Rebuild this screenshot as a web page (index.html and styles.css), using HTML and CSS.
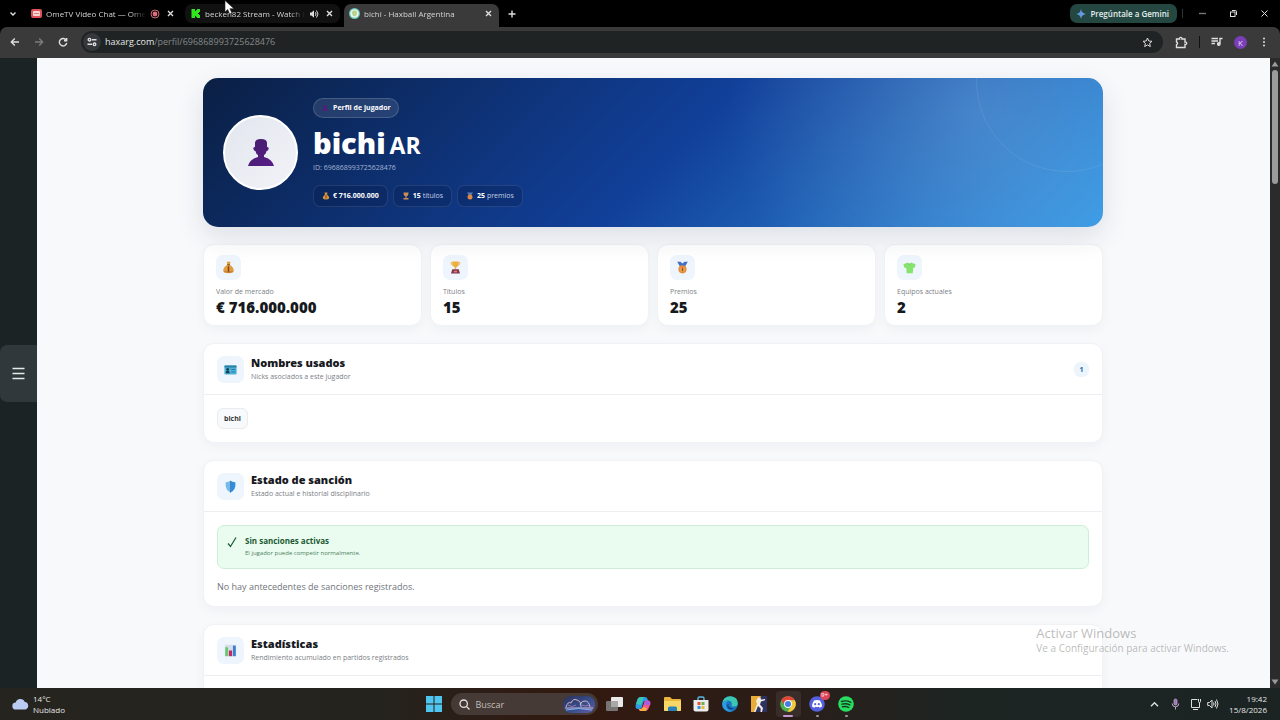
FILE: index.html
```html
<!DOCTYPE html>
<html lang="es">
<head>
    <meta charset="UTF-8">
    <meta name="viewport" content="width=device-width, initial-scale=1.0">
    <title>bichi - Haxball Argentina</title>
    <link rel="stylesheet" href="styles.css">
</head>
<body>
    <div class="tab-strip">
        <button class="icon-button tab-search" aria-label="Buscar pestañas">
            <svg class="stroke" width="10" height="10" viewBox="0 0 10 10"><path d="M2.5 3.5 5 6l2.500-2.500"/></svg>
        </button>
        <div class="tab">
            <svg width="11" height="11" viewBox="0 0 11 11"><rect y="1" width="11" height="9" rx="2" fill="#e0525a"/><rect x="2" y="3" width="7" height="5" rx="1" fill="#f6d6d2"/><path d="M3 5.500h5" stroke="#d98484"/></svg>
            <a class="tab-title" href="#">OmeTV Video Chat — Ome</a>
            <svg width="10" height="10" viewBox="0 0 10 10"><circle cx="5" cy="5" r="4" fill="none" stroke="#cf6a78"/><circle cx="5" cy="5" r="2.400" fill="#e06c7c"/></svg>
            <button class="icon-button tab-close" aria-label="Cerrar"><svg class="stroke" width="7" height="7" viewBox="0 0 7 7"><path d="m1 1 5 5M6 1 1 6"/></svg></button>
        </div>
        <div class="tab tab-dark">
            <svg width="11" height="11" viewBox="0 0 11 11"><path d="M1.500 1H5v2h1V2h1V1h3v3H9v1H8v1h1v1h1v3H7V9H6V8H5v2H1.500z" fill="#2fe61c"/></svg>
            <a class="tab-title" href="#">becken82 Stream - Watch L</a>
            <svg width="10" height="10" viewBox="0 0 10 10"><path d="M1 3.500h1.500L5 1.300v7.400L2.500 6.500H1z" fill="#ddd"/><path d="M6.300 3.200q1.500 1.800 0 3.600M7.500 1.500q3 3.500 0 7" fill="none" stroke="#ddd"/></svg>
            <button class="icon-button tab-close" aria-label="Cerrar"><svg class="stroke" width="7" height="7" viewBox="0 0 7 7"><path d="m1 1 5 5M6 1 1 6"/></svg></button>
        </div>
        <div class="tab tab-active">
            <svg width="11" height="11" viewBox="0 0 11 11"><circle cx="5.500" cy="5.500" r="5.500" fill="#63c4b8"/><circle cx="5.500" cy="5.500" r="4.300" fill="#e9f5e6"/><path d="M5.500 2.300 7.800 3.500v2.200q-.5 2-2.300 2.800-1.800-.8-2.300-2.800V3.500z" fill="#a8cf8e"/><path d="M5.500 3.500v3.600" stroke="#e6d46a"/></svg>
            <a class="tab-title" href="#">bichi - Haxball Argentina</a>
            <button class="icon-button tab-close" aria-label="Cerrar"><svg class="stroke" width="7" height="7" viewBox="0 0 7 7"><path d="m1 1 5 5M6 1 1 6"/></svg></button>
        </div>
        <button class="icon-button new-tab" aria-label="Nueva pestaña"><svg class="stroke" width="8" height="8" viewBox="0 0 8 8"><path d="M4 .5v7M.5 4h7"/></svg></button>
        <button class="gemini">
            <svg width="10" height="10" viewBox="0 0 10 10">
                <defs><linearGradient id="spark" x1="0" y1="0" x2="1" y2="0"><stop offset="0" stop-color="#58b4a0"/><stop offset=".5" stop-color="#5d93f0"/><stop offset="1" stop-color="#8fb3e8"/></linearGradient></defs>
                <path d="M5 0q.6 4.400 5 5-4.400.6-5 5-.6-4.400-5-5 4.400-.6 5-5z" fill="url(#spark)"/>
            </svg>
            Pregúntale a Gemini
        </button>
        <div class="window-buttons">
            <button class="icon-button" aria-label="Minimizar"><svg class="stroke dim" width="9" height="9" viewBox="0 0 9 9"><path d="M1 4.500h7"/></svg></button>
            <button class="icon-button" aria-label="Restaurar"><svg class="stroke thin" width="9" height="9" viewBox="0 0 9 9"><rect x="1.500" y="3" width="4.500" height="4.500"/><path d="M3 1.500h3.500q1 0 1 1V6"/></svg></button>
            <button class="icon-button" aria-label="Cerrar ventana"><svg class="stroke thin" width="9" height="9" viewBox="0 0 9 9"><path d="m1.500 1.500 6 6M7.500 1.500l-6 6"/></svg></button>
        </div>
    </div>

    <div class="toolbar">
        <button class="icon-button nav-button" aria-label="Atrás"><svg class="stroke" width="10" height="10" viewBox="0 0 10 10"><path d="M9 5H1.500M4.800 1.500 1.300 5l3.500 3.500"/></svg></button>
        <button class="icon-button nav-button faded" aria-label="Adelante"><svg class="stroke" width="10" height="10" viewBox="0 0 10 10"><path d="M1 5h7.500M5.200 1.500 8.700 5 5.200 8.500"/></svg></button>
        <button class="icon-button nav-button" aria-label="Recargar"><svg class="stroke" width="10" height="10" viewBox="0 0 10 10"><path d="M8.200 3.200A3.700 3.700 0 1 0 8.700 6M8.700 1v2.700H6"/></svg></button>
        <div class="address-bar">
            <button class="icon-button site-info" aria-label="Información del sitio"><svg class="stroke" width="10" height="10" viewBox="0 0 10 10"><circle cx="2.500" cy="2.700" r="1.300"/><path d="M5 2.700h4.500M.5 7.300H5"/><circle cx="7.500" cy="7.300" r="1.300"/></svg></button>
            <label for="address">haxarg.com</label>
            <input id="address" type="text" value="/perfil/696868993725628476">
            <button class="icon-button" aria-label="Favorito"><svg class="stroke thin" width="11" height="11" viewBox="0 0 11 11"><path d="m5.500 1 1.300 3 3.200.3-2.400 2.100.7 3.200-2.800-1.700-2.800 1.700.7-3.200L1 4.300 4.200 4z"/></svg></button>
        </div>
        <div class="toolbar-actions">
            <button class="icon-button" aria-label="Extensiones"><svg class="stroke" width="13" height="13" viewBox="0 0 13 13"><path d="M1.500 3H4.500a1.300 1.300 0 1 1 2.500 0h3v3a1.300 1.300 0 1 1 0 2.500V11.500H1.500V8.700a1.400 1.400 0 0 0 0-2.700z"/></svg></button>
            <span class="divider"></span>
            <button class="icon-button" aria-label="Multimedia"><svg class="stroke" width="12" height="12" viewBox="0 0 12 12"><path d="M.5 2.500h6.500M.5 5h6.500M.5 7.500H4M9 7.500v-5h2.500"/><circle cx="7.800" cy="8" r="1.200" fill="#ddd"/></svg></button>
            <button class="account" aria-label="Cuenta">K</button>
            <button class="icon-button" aria-label="Menú"><svg width="4" height="10" viewBox="0 0 4 10" fill="#ddd"><circle cx="2" cy="1.500" r="1"/><circle cx="2" cy="5" r="1"/><circle cx="2" cy="8.500" r="1"/></svg></button>
        </div>
    </div>

    <div class="viewport">
        <aside class="side-rail">
            <button class="menu-toggle" aria-label="Abrir menú"><svg width="13" height="13" viewBox="0 0 13 13"><path d="M.5 1.500h12M.5 6.500h12M.5 11.500h12" stroke="#e6e9ea" stroke-width="1.300"/></svg></button>
        </aside>

        <main class="page">
            <div class="container">
                <header class="hero">
                    <div class="avatar">
                        <svg width="28" height="30" viewBox="0 0 28 30">
                            <defs><linearGradient id="bust" x1="0" y1="0" x2="1" y2="1"><stop offset="0" stop-color="#421e6a"/><stop offset="1" stop-color="#5a1e88"/></linearGradient></defs>
                            <path d="M8 5q0-4 6-4t6 4v4q2 0 1.600 2t-2 2q-.6 3-2.600 4v2q8 2 10 9H1q2-7 10-9v-2q-2-1-2.600-4-1.600 0-2-2T8 9z" fill="url(#bust)"/>
                        </svg>
                    </div>
                    <div class="hero-info">
                        <span class="hero-badge"><svg width="8" height="8" viewBox="0 0 8 8"><path d="M4 1a1.700 1.700 0 0 1 1 3q2 .6 2 3H1q0-2.400 2-3a1.700 1.700 0 0 1 1-3z" fill="#4b2278"/></svg>Perfil de jugador</span>
                        <h1>bichi <span>AR</span></h1>
                        <p class="player-id">ID: 696868993725628476</p>
                        <div class="hero-chips">
                            <span class="hero-chip"><svg width="8" height="8" viewBox="0 0 16 16"><path d="M5 1h6L10 5q5 4 4 8-1 2-6 2t-6-2q-1-4 4-8z" fill="#d9943e"/><path d="M8 6v7" stroke="#7a4a20" stroke-width="2"/></svg><b>€ 716.000.000</b></span>
                            <span class="hero-chip"><svg width="8" height="8" viewBox="0 0 16 16"><path d="M3 1h10q0 7-4 8v3h4v3H3v-3h4V9Q3 8 3 1z" fill="#c98d58"/></svg><span><b>15</b> títulos</span></span>
                            <span class="hero-chip"><svg width="8" height="8" viewBox="0 0 16 16"><path d="M2 1h12l-4 6H6z" fill="#5b78b8"/><circle cx="8" cy="10" r="5" fill="#d98a44"/></svg><span><b>25</b> premios</span></span>
                        </div>
                    </div>
                </header>

                <section class="stats">
                    <article class="card stat">
                        <span class="stat-icon"><svg width="13" height="13" viewBox="0 0 16 16"><path d="M6 .8h4.500L9.600 4.500Q15 8 14.500 12.300 14 15 8 15t-6.500-2.700Q1 8 6.600 4.500z" fill="#e29d3f"/><path d="M6.500 4.500h3.200" stroke="#8c4f21" stroke-width="1.300"/><path d="M8 6.500v7" stroke="#80441f" stroke-width="1.800"/><path d="M3 13q5 2 10 0" stroke="#b46a2b" fill="none"/></svg></span>
                        <span class="stat-label">Valor de mercado</span>
                        <strong>€ 716.000.000</strong>
                    </article>
                    <article class="card stat">
                        <span class="stat-icon"><svg width="13" height="13" viewBox="0 0 16 16"><path d="M4 .5h8q0 6-3.200 7.500V10H7.200V8Q4 6.500 4 .5z" fill="#efb03b"/><path d="M4 2H2.500q0 3 2.500 3.500M12 2h1.500q0 3-2.500 3.500" fill="none" stroke="#e6a23a"/><path d="M4 10h8l1.500 5.500h-11z" fill="#7d3850"/><path d="M6 12h4v2H6z" fill="#ee7368"/></svg></span>
                        <span class="stat-label">Títulos</span>
                        <strong>15</strong>
                    </article>
                    <article class="card stat">
                        <span class="stat-icon"><svg width="13" height="13" viewBox="0 0 16 16"><path d="M1.500 1h4L8 3l2.500-2h4L11 7H5z" fill="#426fc8"/><circle cx="8" cy="10.300" r="5" fill="#e08d3c"/><circle cx="8" cy="10.300" r="3.300" fill="#ed9f4d"/><path d="M8 8v4.500" stroke="#93502a" stroke-width="1.500"/></svg></span>
                        <span class="stat-label">Premios</span>
                        <strong>25</strong>
                    </article>
                    <article class="card stat">
                        <span class="stat-icon"><svg width="13" height="13" viewBox="0 0 16 16"><path d="M4.500 2.500q3.500 1.500 7 0l4 1.500-1 4-2 .5-.5 6.500H4.500L4 8.500 1.500 8l-1-4z" fill="#86e36d"/><path d="M5 2.500q3 3 6 0" fill="none" stroke="#62cc58"/></svg></span>
                        <span class="stat-label">Equipos actuales</span>
                        <strong>2</strong>
                    </article>
                </section>

                <section class="card panel">
                    <div class="panel-header">
                        <span class="panel-icon"><svg width="13" height="13" viewBox="0 0 16 16"><rect x=".5" y="3" width="15" height="11" rx="1.500" fill="#49b3d8"/><rect x=".5" y="3" width="15" height="2.500" rx="1" fill="#2d7fa6"/><circle cx="4.500" cy="8" r="1.700" fill="#1f3b4b"/><path d="M2 12.500q0-3 2.500-3t2.500 3z" fill="#1f3b4b"/><path d="M9 8h5M9 11h5" stroke="#226f96"/></svg></span>
                        <div>
                            <h2>Nombres usados</h2>
                            <p>Nicks asociados a este jugador</p>
                        </div>
                        <span class="count">1</span>
                    </div>
                    <div class="panel-body">
                        <span class="nick">bichi</span>
                    </div>
                </section>

                <section class="card panel">
                    <div class="panel-header">
                        <span class="panel-icon"><svg width="13" height="13" viewBox="0 0 16 16"><path d="M8 1q3 2 6 1.700Q15 12 8 15.500z" fill="#2f8fdc"/><path d="M8 1Q5 3 2 2.700 1 12 8 15.500z" fill="#79b9ea"/><path d="M8 1v14.500" stroke="#3277b0"/></svg></span>
                        <div>
                            <h2>Estado de sanción</h2>
                            <p>Estado actual e historial disciplinario</p>
                        </div>
                    </div>
                    <div class="panel-body">
                        <div class="notice">
                            <svg width="10" height="12" viewBox="0 0 10 12"><path d="M1 7.500 3.500 10.500 9 1.500" fill="none" stroke="#235c39" stroke-width="1.300"/></svg>
                            <div>
                                <strong>Sin sanciones activas</strong>
                                <p>El jugador puede competir normalmente.</p>
                            </div>
                        </div>
                        <p class="empty">No hay antecedentes de sanciones registrados.</p>
                    </div>
                </section>

                <section class="card panel">
                    <div class="panel-header">
                        <span class="panel-icon"><svg width="13" height="13" viewBox="0 0 16 16"><rect x="1" y="1" width="14" height="14" rx="1" fill="#d6dde8"/><rect x="1.500" y="4" width="3.500" height="11" fill="#6cc773"/><rect x="6" y="8" width="4" height="7" fill="#c02b62"/><rect x="11" y="2" width="3.500" height="13" fill="#3b7fd0"/></svg></span>
                        <div>
                            <h2>Estadísticas</h2>
                            <p>Rendimiento acumulado en partidos registrados</p>
                        </div>
                    </div>
                    <div class="panel-body"></div>
                </section>
            </div>
        </main>

        <div class="scrollbar">
            <svg width="8" height="6" viewBox="0 0 8 6"><path d="M4 .5 7.500 5.500h-7z" fill="#9a9a9a"/></svg>
            <span class="thumb"></span>
            <svg width="8" height="6" viewBox="0 0 8 6"><path d="M4 5.500 7.500.5h-7z" fill="#9a9a9a"/></svg>
        </div>

        <div class="watermark">
            <p class="watermark-title">Activar Windows</p>
            <p>Ve a Configuración para activar Windows.</p>
        </div>
    </div>

    <footer class="taskbar">
        <div class="weather">
            <svg width="17" height="12" viewBox="0 0 17 12"><path d="M4 11.500a3.500 3.500 0 0 1-.3-7A4.800 4.800 0 0 1 12.800 4a3.800 3.800 0 0 1 .4 7.500z" fill="#bccbf2"/></svg>
            <p>14°C<br>Nublado</p>
        </div>
        <div class="apps">
            <button class="app" aria-label="Inicio"><svg width="16" height="16" viewBox="0 0 16 16"><path d="M0 0h7.500v7.500H0zM8.500 0H16v7.500H8.500zM0 8.500h7.500V16H0zM8.500 8.500H16V16H8.500z" fill="#4fc6f2"/></svg></button>
            <div class="search">
                <svg width="11" height="11" viewBox="0 0 11 11"><circle cx="4.700" cy="4.700" r="3.700" fill="none" stroke="#e3dfdc" stroke-width="1.300"/><path d="m7.500 7.500 3 3" stroke="#e3dfdc" stroke-width="1.300"/></svg>
                <input type="text" aria-label="Buscar" placeholder="Buscar">
                <svg width="32" height="17" viewBox="0 0 32 17">
                    <defs><linearGradient id="night" x1="0" y1="0" x2="1" y2="1"><stop offset="0" stop-color="#2b3258"/><stop offset=".6" stop-color="#39508f"/><stop offset="1" stop-color="#6c5aa8"/></linearGradient></defs>
                    <rect width="32" height="17" rx="8" fill="url(#night)"/>
                    <path d="M3 11q2-6 5-4 2-5 6-3 4 1 4 7M17 9q2-5 5-4 4 0 5 6M2 12h28" fill="none" stroke="#d3b9cf"/>
                    <path d="M5 9q4 3 8 0M19 9q3 2 7 0" fill="none" stroke="#8f7bb4"/>
                    <path d="M3 14q13-3 26 0" fill="none" stroke="#80b0ee"/>
                </svg>
            </div>
            <button class="app" aria-label="Vista de tareas"><svg width="17" height="16" viewBox="0 0 17 16"><rect x="5" y="1" width="12" height="10" rx="1" fill="#e9e9e9"/><rect x="0" y="5" width="12" height="10" rx="1" fill="#777574"/><path d="M5 5h7v6H5z" fill="#aaa8a7"/></svg></button>
            <button class="app" aria-label="Copilot"><svg width="16" height="16" viewBox="0 0 16 16"><path d="M6 1h4q2 0 2.500 2l.7 2H10Q8.500 5 8 7l-1 4q-.6 2-2.500 2H3q-3 0-2.300-4l1.600-5Q3.200 1 6 1z" fill="#2b9be8"/><path d="M1 8l1.300-4Q3.200 1 6 1h3L6 9z" fill="#39c6b8"/><path d="M10 15H6q-2 0-2.500-2h2Q7 13 8 10l1.200-4Q9.700 4.500 11 4.500h2q3 0 2.300 4L13.700 12Q12.800 15 10 15z" fill="#ef5a8a"/><path d="M4 13h2q1.500 0 2-2l4 1-1 3H6q-1.500 0-2-2z" fill="#f4b13e"/><path d="m11 4.500 3 .3q1.800 1 1.200 4H9z" fill="#a65ae6"/></svg></button>
            <button class="app" aria-label="Explorador"><svg width="17" height="16" viewBox="0 0 17 16"><path d="M0 2q0-1 1-1h5l2 2h8q1 0 1 1v10q0 1-1 1H1q-1 0-1-1z" fill="#e9b53a"/><path d="M0 5h17v9q0 1-1 1H1q-1 0-1-1z" fill="#f7d765"/><path d="M4 15v-3q0-1.500 1.500-1.500h6q1.500 0 1.500 1.500v3z" fill="#2781b8"/></svg></button>
            <button class="app" aria-label="Tienda"><svg width="16" height="16" viewBox="0 0 16 16"><path d="M5 4V2.500Q5 1 6.500 1h3Q11 1 11 2.500V4" fill="none" stroke="#58b8ea" stroke-width="1.400"/><path d="M.5 4h15v9.500q0 2-2 2h-11q-2 0-2-2z" fill="#ececec"/><path d="M4.500 6h3v3h-3z" fill="#e5533d"/><path d="M8.500 6h3v3h-3z" fill="#69b345"/><path d="M4.500 10h3v3h-3z" fill="#2f94dc"/><path d="M8.500 10h3v3h-3z" fill="#f0b430"/></svg></button>
            <button class="app" aria-label="Edge"><svg width="16" height="16" viewBox="0 0 16 16"><circle cx="8" cy="8" r="7.800" fill="#1876c4"/><path d="M.3 7Q1.500.2 8.500.2q7.300.6 7.300 7 0 3.300-4 3.300-3 0-2-2 .5-3.500-3.500-4Q2 4.500.3 7z" fill="#3cc7b0"/><path d="M6 5Q2.500 8 5 12t7.500 2.500Q9.500 16 6 15.500-.5 13 .3 7 2 4.200 6 5z" fill="#2c9ce2"/><path d="M6.500 7.500Q5.500 13 12.500 12q-4 3-7-.3Q4.500 9 6.500 7.500z" fill="#143e78"/></svg></button>
            <button class="app" aria-label="Counter-Strike"><svg width="16" height="16" viewBox="0 0 16 16"><path d="M0 0h16v16H0z" fill="#2e3263"/><path d="M0 0h10L4 16H0z" fill="#e9ac36"/><path d="M7 1.500h2.500l.5 2 4-.5v1.200L10 5.500l-1 3 3 3.500-1 4H9.500l.2-3.500L7 10l-2.500 6H3L6 8 5 5z" fill="#f2eee2"/></svg></button>
            <button class="app app-active" aria-label="Chrome"><svg width="16" height="16" viewBox="0 0 16 16"><circle cx="8" cy="8" r="7.800" fill="#4caf50"/><path d="M1.200 4.100A7.800 7.800 0 0 1 14.800 4.200H8L4.700 10z" fill="#e2463a"/><path d="M14.800 4.200A7.800 7.800 0 0 1 7.500 15.800L11.400 10 8 4.200z" fill="#f7c93a"/><circle cx="8" cy="8" r="3.900" fill="#fff"/><circle cx="8" cy="8" r="3" fill="#3f7fe6"/></svg></button>
            <button class="app app-open" aria-label="Discord"><svg width="16" height="16" viewBox="0 0 16 16"><circle cx="8" cy="8" r="7.800" fill="#5560dc"/><path d="M5 4.500q3-1 6 0 2 3 2 6-1 1-2.500 1.300l-.6-1q-1.900.5-3.800 0l-.6 1Q4 11.500 3 10.500q0-3 2-6z" fill="#fff"/><circle cx="6.200" cy="8.200" r="1.100" fill="#5560dc"/><circle cx="9.800" cy="8.200" r="1.100" fill="#5560dc"/></svg><span class="notification">9+</span></button>
            <button class="app app-open" aria-label="Spotify"><svg width="16" height="16" viewBox="0 0 16 16"><circle cx="8" cy="8" r="7.800" fill="#2bdc62"/><path d="M3.500 5.500q5-1.500 9.300.8M4 8.200q4-1.200 7.800.7M4.500 10.800q3.300-.9 6.300.7" fill="none" stroke="#123b20" stroke-width="1.400" stroke-linecap="round"/></svg></button>
        </div>
        <div class="tray">
            <svg class="stroke" width="9" height="9" viewBox="0 0 9 9"><path d="M1 6.200 4.500 2.700 8 6.200"/></svg>
            <svg class="mic" width="9" height="12" viewBox="0 0 9 12"><rect x="3" y="1" width="3" height="6" rx="1.500" fill="#9c72b8" stroke="#c9b5d6" stroke-width=".7"/><path d="M1.200 5.500q0 3.300 3.300 3.300t3.300-3.300M4.500 9v2.500" fill="none" stroke="#c9b5d6" stroke-width=".9"/></svg>
            <svg class="stroke thin" width="12" height="12" viewBox="0 0 12 12"><path d="M7.500 1.500h-6v8h8V6M3 11.500h5M8.500 1v2.500q0 1 1 1t1-1V1M9.500 4.500V7"/></svg>
            <svg class="stroke thin" width="12" height="12" viewBox="0 0 12 12"><path d="M.7 4.500h1.800L5 2v8L2.500 7.500H.7zM6.500 4.500q1 1.500 0 3M8 3q2 3 0 6M9.500 1.500q3 4.500 0 9"/></svg>
            <p class="clock">19:42<br>15/8/2026</p>
        </div>
    </footer>

    <svg class="cursor" width="12" height="15" viewBox="0 0 12 15"><path d="M1 .5v11.500l2.700-2.500 2 4.500 2.200-1-2-4.300H10z" fill="#fff" stroke="#222" stroke-width=".6"/></svg>
</body>
</html>
```

FILE: styles.css
```css
* {
    box-sizing: border-box;
}
body {
    margin: 0;
    height: 100vh;
    display: flex;
    flex-direction: column;
    overflow: hidden;
    background: #000;
    color: #16191d;
    font-family: "Open Sans", "Noto Sans", sans-serif;
    font-size: 9px;
    line-height: 12px;
}
h1, h2, p {
    margin: 0;
}
button, input {
    font: inherit;
    color: inherit;
    border: none;
    background: none;
    padding: 0;
    min-width: 0;
}
svg {
    display: block;
    flex: none;
}
.stroke {
    fill: none;
    stroke: #dedede;
    stroke-width: 1.4;
}
.thin {
    stroke-width: 1;
}
.dim {
    stroke: #777;
}
.icon-button {
    display: flex;
    align-items: center;
    justify-content: center;
    flex: none;
}

/* browser */
.tab-strip {
    display: flex;
    align-items: center;
    height: 27px;
    flex: none;
    color: #d4d4d4;
    font-size: 8px;
}
.tab-search {
    width: 26px;
}
.tab {
    display: flex;
    align-items: center;
    gap: 4px;
    flex: 0 1 155px;
    min-width: 0;
    height: 19px;
    padding: 0 5px;
    margin-right: 4px;
    border-radius: 7px;
}
.tab-dark {
    background: #101110;
}
.tab-active {
    background: #3a3a3b;
    height: 23px;
    margin-top: 4px;
    padding-bottom: 4px;
    border-radius: 7px 7px 0 0;
}
.tab-title {
    flex: 1;
    color: inherit;
    text-decoration: none;
    white-space: nowrap;
    overflow: hidden;
    mask-image: linear-gradient(90deg, #000 85%, transparent);
}
.tab-close {
    width: 12px;
}
.new-tab {
    width: 17px;
}
.gemini {
    display: flex;
    align-items: center;
    gap: 4px;
    height: 19px;
    padding: 0 8px 0 6px;
    margin-left: auto;
    border-radius: 7px;
    background: #254742;
    color: #e2eeeb;
    font-weight: 600;
    white-space: nowrap;
}
.window-buttons {
    display: flex;
    margin-left: 5px;
    padding-left: 4px;
    border-left: 1px solid #333;
}
.window-buttons .icon-button {
    width: 31px;
}
.toolbar {
    display: flex;
    align-items: center;
    height: 31px;
    flex: none;
    padding: 0 0 1px 3px;
    background: #3a3a3b;
    border-radius: 7px 7px 0 0;
    color: #e4e6e7;
}
.nav-button {
    width: 24px;
}
.faded {
    opacity: 0.4;
}
.address-bar {
    display: flex;
    align-items: center;
    flex: 1;
    height: 22px;
    margin-left: 6px;
    padding: 0 10px 0 2px;
    border-radius: 11px;
    background: #1f2324;
}
.address-bar input {
    flex: 1;
    color: #83888a;
}
.site-info {
    width: 18px;
    height: 18px;
    margin-right: 4px;
    border-radius: 9px;
    background: #34383a;
}
.toolbar-actions {
    display: flex;
    align-items: center;
    gap: 11px;
    padding: 0 14px 0 12px;
}
.divider {
    width: 1px;
    height: 12px;
    background: #111;
}
.account {
    width: 13px;
    height: 13px;
    margin-right: 4px;
    border-radius: 50%;
    background: #7a3fb8;
    color: #e8d8f6;
    font-size: 8px;
    line-height: 13px;
}

/* page */
.viewport {
    position: relative;
    display: flex;
    flex: 1;
    min-height: 0;
}
.side-rail {
    display: flex;
    align-items: center;
    width: 37px;
    flex: none;
    background: #1c2325;
}
.menu-toggle {
    display: flex;
    align-items: center;
    justify-content: center;
    width: 37px;
    height: 57px;
    border-radius: 7px 0 0 7px;
    background: #31383b;
}
.page {
    flex: 1;
    min-width: 0;
    overflow: hidden;
    padding: 20px 21px 20px 20px;
    background: #f8f9fb;
}
.container {
    display: flex;
    flex-direction: column;
    gap: 17px;
    max-width: 900px;
    margin: 0 auto;
}
.hero {
    position: relative;
    display: flex;
    align-items: center;
    gap: 15px;
    padding: 20px;
    border-radius: 15px;
    overflow: hidden;
    background:
        radial-gradient(circle at 86% 20%, rgba(255, 255, 255, 0.16), transparent 32%),
        linear-gradient(135deg, #0a1f44 0%, #11409a 52%, #3498e4 100%);
    color: #fff;
    box-shadow: 0 10px 28px rgba(20, 40, 70, 0.12);
}
.hero::after {
    content: "";
    position: absolute;
    top: -88px;
    right: -55px;
    width: 180px;
    height: 180px;
    border: 1px solid rgba(255, 255, 255, 0.09);
    border-radius: 50%;
}
.avatar {
    display: flex;
    align-items: center;
    justify-content: center;
    width: 75px;
    height: 75px;
    flex: none;
    border: 2px solid #fff;
    border-radius: 50%;
    background: linear-gradient(135deg, #e2e6ee, #f2f3f8);
}
.hero-info {
    display: flex;
    flex-direction: column;
    align-items: flex-start;
}
.hero-badge {
    display: flex;
    align-items: center;
    gap: 4px;
    height: 20px;
    padding: 0 7px;
    border: 1px solid rgba(255, 255, 255, 0.16);
    border-radius: 10px;
    background: rgba(255, 255, 255, 0.1);
    font-size: 7px;
    font-weight: 700;
}
.hero h1 {
    display: flex;
    align-items: baseline;
    gap: 4px;
    margin-top: 8px;
    font-size: 29px;
    font-weight: 800;
    line-height: 34px;
}
.hero h1 span {
    font-size: 23px;
    font-weight: 700;
}
.player-id {
    color: #a3b4d2;
    font-size: 7px;
}
.hero-chips {
    display: flex;
    flex-wrap: wrap;
    gap: 5px;
    margin-top: 11px;
}
.hero-chip {
    display: flex;
    align-items: center;
    gap: 3px;
    height: 22px;
    padding: 0 8px;
    border: 1px solid rgba(255, 255, 255, 0.1);
    border-radius: 7px;
    background: rgba(5, 20, 60, 0.22);
    color: #c3d0e6;
    font-size: 7px;
}
.hero-chip b {
    color: #fff;
}
.card {
    border: 1px solid #f0f2f5;
    border-radius: 11px;
    background: #fff;
    box-shadow: 0 4px 12px rgba(20, 30, 50, 0.04);
}
.stats {
    display: grid;
    grid-template-columns: repeat(4, 1fr);
    gap: 8px;
}
.stat {
    display: flex;
    flex-direction: column;
    align-items: flex-start;
    padding: 10px 12px 9px 12px;
}
.stat-icon, .panel-icon {
    display: flex;
    align-items: center;
    justify-content: center;
    width: 25px;
    height: 25px;
    flex: none;
    border-radius: 7px;
    background: #eff5fd;
}
.stat-label {
    margin-top: 6px;
    color: #7b8087;
    font-size: 7px;
}
.stat strong {
    font-size: 15px;
    font-weight: 800;
    line-height: 18px;
}
.panel-header {
    display: flex;
    align-items: center;
    gap: 7px;
    height: 51px;
    padding: 0 13px;
    border-bottom: 1px solid #eceef1;
}
.panel-icon {
    width: 27px;
    height: 27px;
}
.panel h2 {
    font-family: "Noto Sans", "Open Sans", sans-serif;
    font-size: 11px;
    font-weight: 900;
    line-height: 16px;
}
.panel-header p {
    color: #7b8087;
    font-size: 7px;
}
.count {
    margin-left: auto;
    width: 15px;
    border-radius: 6px;
    background: #edf5fc;
    color: #2468a0;
    font-size: 7px;
    font-weight: 700;
    line-height: 15px;
    text-align: center;
}
.panel-body {
    padding: 13px;
}
.nick {
    display: inline-block;
    padding: 0 6px;
    border: 1px solid #e9ebee;
    border-radius: 6px;
    background: #f8f9fa;
    color: #33373c;
    font-size: 7px;
    font-weight: 700;
    line-height: 19px;
    vertical-align: top;
}
.notice {
    display: flex;
    gap: 8px;
    padding: 9px;
    border: 1px solid #cdeed8;
    border-radius: 7px;
    background: #eafcef;
    color: #4e7c5e;
    font-size: 6px;
}
.notice svg {
    margin-top: 1px;
}
.notice strong {
    display: block;
    color: #1b5a33;
    font-size: 8px;
    font-weight: 700;
}
.empty {
    margin-top: 12px;
    color: #70757b;
}
.scrollbar {
    display: flex;
    flex-direction: column;
    align-items: center;
    width: 10px;
    flex: none;
    padding: 3px 0;
    background: #2b2b2b;
}
.thumb {
    width: 6px;
    height: 114px;
    margin: 3px 0 auto 0;
    border-radius: 3px;
    background: #9b9b9b;
}
.watermark {
    position: absolute;
    right: 51px;
    bottom: 33px;
    color: rgba(130, 130, 130, 0.55);
    font-size: 10px;
    line-height: 14px;
}
.watermark-title {
    font-size: 13px;
    line-height: 16px;
}

/* taskbar */
.taskbar {
    display: grid;
    grid-template-columns: 1fr auto 1fr;
    align-items: center;
    height: 32px;
    flex: none;
    background: linear-gradient(90deg, #25241f 0%, #25231e 30%, #33190f 45%, #2b1d18 60%, #1d2523 75%, #1b2423 100%);
    color: #e6e6e4;
    font-size: 8px;
    line-height: 11px;
}
.weather {
    display: flex;
    align-items: center;
    gap: 4px;
    padding-left: 12px;
}
.apps {
    display: flex;
    align-items: center;
}
.app {
    position: relative;
    display: flex;
    align-items: center;
    justify-content: center;
    width: 29px;
    height: 32px;
}
.app-active, .app-open {
    border: solid transparent;
    border-width: 3px 2px;
}
.app-active {
    background: rgba(255, 255, 255, 0.07) padding-box;
    border-radius: 6px;
}
.app-active::after, .app-open::after {
    content: "";
    position: absolute;
    bottom: 0;
    width: 3px;
    height: 2px;
    border-radius: 1px;
    background: #999;
}
.app-active::after {
    width: 10px;
    background: #c596d2;
}
.notification {
    position: absolute;
    top: 0;
    right: 0;
    width: 10px;
    border-radius: 5px;
    background: #dc4458;
    color: #fff;
    font-size: 6px;
    line-height: 9px;
}
.search {
    display: flex;
    align-items: center;
    gap: 6px;
    width: 147px;
    height: 22px;
    margin: 0 2px;
    padding: 0 3px 0 8px;
    border-radius: 11px;
    background: #453a36;
    font-size: 9px;
}
.search input {
    flex: 1;
}
.search input::placeholder {
    color: #c4bdb9;
}
.tray {
    display: flex;
    align-items: center;
    justify-content: flex-end;
    padding-right: 13px;
}
.mic {
    margin: 0 10px 0 12px;
}
.tray .thin + .thin {
    margin-left: 5px;
}
.clock {
    margin-left: 10px;
    text-align: right;
}
.cursor {
    position: absolute;
    top: 0;
    left: 224px;
}
```
